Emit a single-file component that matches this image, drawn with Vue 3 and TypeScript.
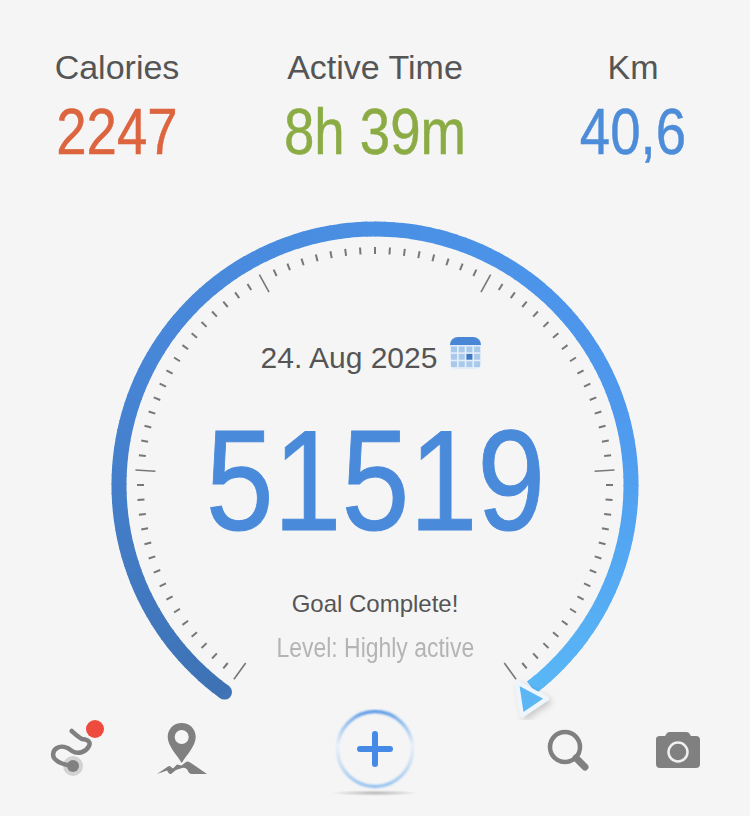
<template>
  <div class="screen">
    <div class="stats">
      <div v-for="s in stats" :key="s.label" class="stat">
        <div class="stat-label">{{ s.label }}</div>
        <div class="stat-value" :class="s.cls">{{ s.value }}</div>
      </div>
    </div>

    <div class="gauge">
      <svg class="dial" width="750" height="510" viewBox="0 0 750 510">
        <defs>
          <filter id="arrowShadow" x="-50%" y="-50%" width="200%" height="200%">
            <feDropShadow dx="3" dy="3" stdDeviation="3" flood-color="#000" flood-opacity="0.18" />
          </filter>
        </defs>
        <line
          v-for="t in ticks"
          :key="t.key"
          :x1="t.x1"
          :y1="t.y1"
          :x2="t.x2"
          :y2="t.y2"
          stroke="#777"
          :stroke-width="t.major ? 1.6 : 2"
        />
        <circle :cx="startCap.x" :cy="startCap.y" r="7.5" fill="#3f74b6" />
        <path
          v-for="a in arcs"
          :key="a.key"
          :d="a.d"
          :stroke="a.color"
          stroke-width="15"
          fill="none"
        />
        <polygon
          points="517,472.500 547,488.500 522,505.500"
          fill="#5cb6f4"
          stroke="#eef6fc"
          stroke-width="4"
          stroke-linejoin="round"
          filter="url(#arrowShadow)"
        />
      </svg>
      <div class="date-row">
        <span class="date">24. Aug 2025</span>
        <svg class="calendar" width="32" height="34" viewBox="0 0 32 34">
          <path d="M0 9 a8 8 0 0 1 8-8 h15 a8 8 0 0 1 8 8 v0 z" fill="#4a86d6" />
          <path d="M0 9 h31 v18 a6 6 0 0 1-6 6 h-19 a6 6 0 0 1-6-6 z" fill="#e4eef8" />
          <template v-for="r in 3" :key="r">
            <rect
              v-for="c in 4"
              :key="c"
              :x="1 + (c - 1) * 7.7"
              :y="10.5 + (r - 1) * 7.4"
              width="6"
              height="5.8"
              :fill="r === 2 && c === 3 ? '#3f78c4' : '#a9c9ec'"
            />
          </template>
        </svg>
      </div>
      <div class="steps">51519</div>
      <div class="goal">Goal Complete!</div>
      <div class="level">Level: Highly active</div>
    </div>

    <div class="nav">
      <svg class="nav-left" width="170" height="66" viewBox="0 0 170 66">
        <circle cx="23" cy="56" r="10" fill="#d2d2d2" />
        <path
          d="M21.700 21 C25 24 28 27 32 29 C38 29.500 41 32 39 36 C36 42 28 45 22 41 C17 37 11 35.500 7 38 C2 41 2 47 6 50 C10 54 17 55 23 56"
          fill="none"
          stroke="#808080"
          stroke-width="4.500"
          stroke-linecap="round"
        />
        <circle cx="23" cy="56" r="6" fill="#808080" />
        <circle cx="45" cy="19" r="9" fill="#ee4b3c" />
        <path
          d="M131.700 13 C123.500 13 117.700 19.200 117.700 27 C117.700 36 127 45 131.700 53 C136.500 45 145.700 36 145.700 27 C145.700 19.200 139.900 13 131.700 13 Z M131.700 20 A7 7 0 1 1 131.700 34 A7 7 0 1 1 131.700 20 Z"
          fill="#808080"
          fill-rule="evenodd"
        />
        <path
          d="M107 64 L118 56.500 Q120 55.500 121 57 L123 58.500 L127 54.500 L131.500 55.500 L136 52 Q138 50.500 141 53 L157 64 L142 64 Q139 64 138 61 Q136 57 132 58 L126 60 L121 64 Q119 64.500 118 62 L117 60.500 Z"
          fill="#808080"
        />
      </svg>

      <div class="add">
        <svg width="90" height="96" viewBox="0 0 90 96">
          <defs>
            <linearGradient id="ringGrad" x1="0" y1="0" x2="0" y2="1">
              <stop offset="0" stop-color="#4a8fe4" />
              <stop offset="0.22" stop-color="#9cc4ee" />
              <stop offset="0.45" stop-color="#e6eff8" />
              <stop offset="0.7" stop-color="#c4dcf3" />
              <stop offset="1" stop-color="#86bbee" />
            </linearGradient>
            <radialGradient id="floorShadow">
              <stop offset="0" stop-color="#000" stop-opacity="0.24" />
              <stop offset="1" stop-color="#000" stop-opacity="0" />
            </radialGradient>
            <filter id="ringBlur"><feGaussianBlur stdDeviation="0.9" /></filter>
          </defs>
          <ellipse cx="45" cy="84" rx="44" ry="3" fill="url(#floorShadow)" />
          <circle cx="45" cy="40" r="37.500" fill="none" stroke="url(#ringGrad)" stroke-width="3" filter="url(#ringBlur)" />
          <path d="M45 25 V55 M30 40 H60" stroke="#458ae6" stroke-width="6" stroke-linecap="round" />
        </svg>
      </div>

      <svg class="nav-right" width="170" height="50" viewBox="0 0 170 50">
        <circle cx="29" cy="21" r="15" fill="none" stroke="#808080" stroke-width="4.500" />
        <path d="M40 32 L49 41" stroke="#808080" stroke-width="7" stroke-linecap="round" />
        <path
          d="M120 13 Q120 10 124 10 H129 L131 7 Q132 6 134 6 H150 Q152 6 153 7 L155 10 H160 Q164 10 164 14 V38 Q164 42 160 42 H124 Q120 42 120 38 Z"
          fill="#808080"
        />
        <circle cx="142" cy="26" r="9.500" fill="#808080" stroke="#f0f0f0" stroke-width="2.500" />
      </svg>
    </div>
  </div>
</template>

<script setup lang="ts">
interface Stat {
  label: string
  value: string
  cls: string
}

const stats: Stat[] = [
  { label: 'Calories', value: '2247', cls: 'red' },
  { label: 'Active Time', value: '8h 39m', cls: 'green' },
  { label: 'Km', value: '40,6', cls: 'blue' },
]

// dial centre inside the svg (the svg starts at y = 210 on the page)
const cx = 375
const cy = 275
const radius = 256

const point = (deg: number, r: number) => {
  const rad = (deg * Math.PI) / 180
  return {
    x: +(cx + r * Math.sin(rad)).toFixed(2),
    y: +(cy - r * Math.cos(rad)).toFixed(2),
  }
}

const ticks = Array.from({ length: 81 }, (_, i) => {
  const major = i % 16 === 0
  const deg = -144 + i * 3.6
  const a = point(deg, major ? 240 : 238)
  const b = point(deg, major ? 220 : 231)
  return { key: i, major, x1: a.x, y1: a.y, x2: b.x, y2: b.y }
})

const startCap = point(-144, radius)

const stops: [number, number[]][] = [
  [-144, [62, 114, 180]],
  [-60, [72, 134, 216]],
  [0, [74, 144, 228]],
  [70, [78, 152, 238]],
  [143, [90, 184, 246]],
]

const colorAt = (deg: number) => {
  let i = 0
  while (i < stops.length - 2 && deg > stops[i + 1][0]) i++
  const [d0, c0] = stops[i]
  const [d1, c1] = stops[i + 1]
  const t = (deg - d0) / (d1 - d0)
  const rgb = c0.map((v, k) => Math.round(v + (c1[k] - v) * t))
  return `rgb(${rgb.join(',')})`
}

// the arc is cut in short pieces to get a gradient along the stroke
const arcs = Array.from({ length: 143 }, (_, i) => {
  const from = -144 + i * 2
  const a = point(from, radius)
  const b = point(from + 2.3, radius)
  return {
    key: i,
    d: `M${a.x} ${a.y} A${radius} ${radius} 0 0 1 ${b.x} ${b.y}`,
    color: colorAt(from),
  }
})
</script>

<style scoped>
.screen {
  width: 750px;
  height: 816px;
  display: flex;
  flex-direction: column;
  background: #f5f5f5;
  color: #555;
  font-family: "Liberation Sans", Arial, sans-serif;
  overflow: hidden;
}

.stats {
  display: grid;
  grid-template-columns: repeat(3, 234px);
  column-gap: 24px;
  padding-top: 48px;
  height: 162px;
  box-sizing: border-box;
  text-align: center;
}

.stat-label {
  font-size: 34px;
  line-height: 38px;
}

.stat-value {
  font-size: 65px;
  line-height: 74px;
  margin-top: 9px;
  transform: scaleX(0.84);
  -webkit-text-stroke: 0.5px currentColor;
}

.red { color: #dc6540; }
.green { color: #8bac45; }
.blue { color: #4d8cd8; }

.gauge {
  position: relative;
  height: 500px;
  margin-top: 48px;
  display: flex;
  flex-direction: column;
  align-items: center;
  padding-top: 128px;
  box-sizing: border-box;
}

.dial {
  position: absolute;
  left: 0;
  top: 0;
}

.date-row {
  position: relative;
  display: flex;
  align-items: center;
  gap: 13px;
  height: 40px;
  margin-left: -7px;
}

.date {
  font-size: 30px;
}

.calendar {
  margin-top: -11px;
}

.steps {
  position: relative;
  font-size: 142px;
  line-height: 150px;
  margin-top: 28px;
  color: #4a8ada;
  transform: scaleX(0.86);
  -webkit-text-stroke: 1px currentColor;
}

.goal {
  position: relative;
  font-size: 24px;
  line-height: 30px;
  margin-top: 33px;
}

.level {
  position: relative;
  font-size: 27px;
  line-height: 32px;
  margin-top: 13px;
  color: #b4b4b4;
  transform: scaleX(0.85);
}

.nav {
  display: flex;
  align-items: flex-start;
  justify-content: space-between;
  height: 106px;
}

.nav-left {
  margin: 0 0 0 50px;
}

.add {
  margin-top: -1px;
  margin-left: -6px;
}

.nav-right {
  margin: 16px 44px 0 0;
}
</style>
